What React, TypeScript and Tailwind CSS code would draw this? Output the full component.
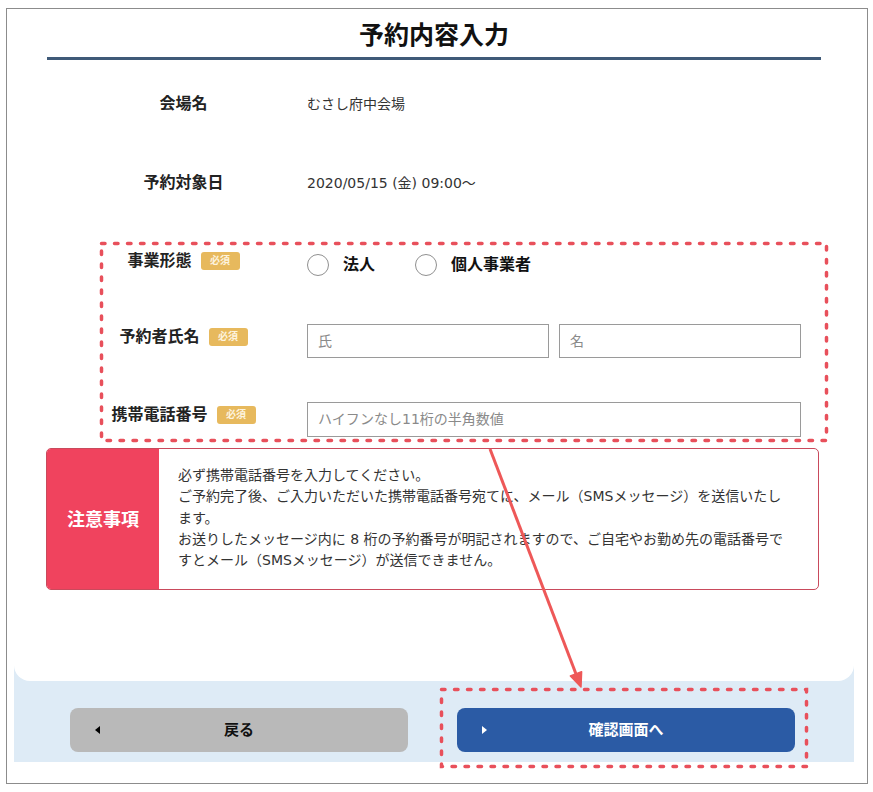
import React from "react";

function Badge() {
  return (
    <span className="flex h-[18px] w-[39px] items-center justify-center rounded-[3px] bg-[#e7b95d] text-[10px] font-bold leading-none text-[#fdf3de]">
      必須
    </span>
  );
}

function Label({ text, required, lift }: { text: string; required?: boolean; lift?: boolean }) {
  return (
    <div
      className={`ml-[46px] flex w-[247px] shrink-0 items-center justify-center gap-[9px] ${lift ? "pb-[8px]" : ""}`}
    >
      <span className="text-[16px] font-bold text-[#222]">{text}</span>
      {required && <Badge />}
    </div>
  );
}

function Radio({ label }: { label: string }) {
  return (
    <label className="flex items-center gap-[14px]">
      <span className="h-[22px] w-[22px] rounded-full border-[1.5px] border-[#909090] bg-white" />
      <span className="text-[16px] font-bold text-[#111]">{label}</span>
    </label>
  );
}

function Field({ placeholder, className }: { placeholder: string; className: string }) {
  return (
    <input
      placeholder={placeholder}
      className={`border border-[#9a9a9a] bg-white px-[10px] text-[14px] text-[#333] outline-none placeholder:text-[#8a8a8a] ${className}`}
    />
  );
}

function Overlay() {
  return (
    <svg className="pointer-events-none absolute inset-0" width="873" height="792" viewBox="0 0 873 792">
      <g fill="none" stroke="#e8505b" strokeWidth="3.5" strokeLinecap="round" strokeDasharray="3.5 9.5">
        <rect x="101.5" y="243.5" width="725" height="197" />
        <rect x="441.5" y="689.5" width="365" height="77" />
      </g>
      <line x1="490" y1="449" x2="576" y2="674" stroke="#ee5858" strokeWidth="3" />
      <polygon points="581,687 581.6,671.8 570.4,676" fill="#ee5858" stroke="#ee5858" strokeWidth="1.5" strokeLinejoin="round" />
    </svg>
  );
}

export default function App() {
  const notes = [
    "必ず携帯電話番号を入力してください。",
    "ご予約完了後、ご入力いただいた携帯電話番号宛てに、メール（SMSメッセージ）を送信いたし",
    "ます。",
    "お送りしたメッセージ内に 8 桁の予約番号が明記されますので、ご自宅やお勤め先の電話番号で",
    "すとメール（SMSメッセージ）が送信できません。",
  ];

  return (
    <div className="relative h-[792px] w-[873px] bg-white pt-[8px] font-['DejaVu_Sans','Noto_Sans_CJK_JP',sans-serif] text-[#333]">
      <div className="ml-[6px] h-[776px] w-[862px] border border-[#8c8c8c] bg-white pl-[7px] pr-[13px]">
        <div className="flex flex-col bg-[#deebf6]">
          <div className="flex h-[672px] flex-col rounded-b-[16px] bg-white">
            <h1 className="mt-[12px] text-center text-[25px] font-bold leading-[30px] text-[#111]">予約内容入力</h1>
            <div className="mx-[33px] mt-[6px] h-[3px] bg-[#3f5a78]" />

            <div className="mt-[24px] flex h-[40px] items-center">
              <Label text="会場名" />
              <span className="text-[14px]">むさし府中会場</span>
            </div>

            <div className="mt-[39px] flex h-[40px] items-center">
              <Label text="予約対象日" />
              <span className="text-[14px]">2020/05/15 (金) 09:00〜</span>
            </div>

            <div className="mt-[42px] flex h-[40px] items-center">
              <Label text="事業形態" required lift />
              <div className="flex items-center gap-[40px]">
                <Radio label="法人" />
                <Radio label="個人事業者" />
              </div>
            </div>

            <div className="mt-[36px] flex h-[40px] items-center">
              <Label text="予約者氏名" required lift />
              <div className="flex w-[494px] gap-[10px]">
                <Field placeholder="氏" className="h-[34px] w-[242px]" />
                <Field placeholder="名" className="h-[34px] w-[242px]" />
              </div>
            </div>

            <div className="mt-[38px] flex h-[40px] items-center">
              <Label text="携帯電話番号" required lift />
              <Field placeholder="ハイフンなし11桁の半角数値" className="h-[35px] w-[494px]" />
            </div>

            <div className="ml-[32px] mt-[9px] flex h-[142px] w-[773px] overflow-hidden rounded-[5px] border border-[#c94a5c]">
              <div className="flex w-[112px] shrink-0 items-center justify-center bg-[#f0435e] text-[18px] font-bold text-white">
                注意事項
              </div>
              <div className="pl-[19px] pt-[16px] text-[14px] leading-[21.3px] text-[#333]">
                {notes.map((line) => (
                  <p key={line} className="whitespace-nowrap">
                    {line}
                  </p>
                ))}
              </div>
            </div>
          </div>

          <div className="flex gap-[49px] pb-[10px] pl-[56px] pt-[27px]">
            <button className="flex h-[44px] w-[338px] items-center rounded-[8px] bg-[#b9b9b9] px-[25px]">
              <span className="h-0 w-0 border-y-[4px] border-r-[5px] border-y-transparent border-r-black" />
              <span className="flex-1 text-center text-[15px] font-bold text-[#111]">戻る</span>
              <span className="w-[5px]" />
            </button>
            <button className="flex h-[44px] w-[338px] items-center rounded-[8px] bg-[#2b5ba5] px-[25px]">
              <span className="h-0 w-0 border-y-[4px] border-l-[5px] border-y-transparent border-l-white" />
              <span className="flex-1 text-center text-[15px] font-bold text-white">確認画面へ</span>
              <span className="w-[5px]" />
            </button>
          </div>
        </div>
      </div>
      <Overlay />
    </div>
  );
}
